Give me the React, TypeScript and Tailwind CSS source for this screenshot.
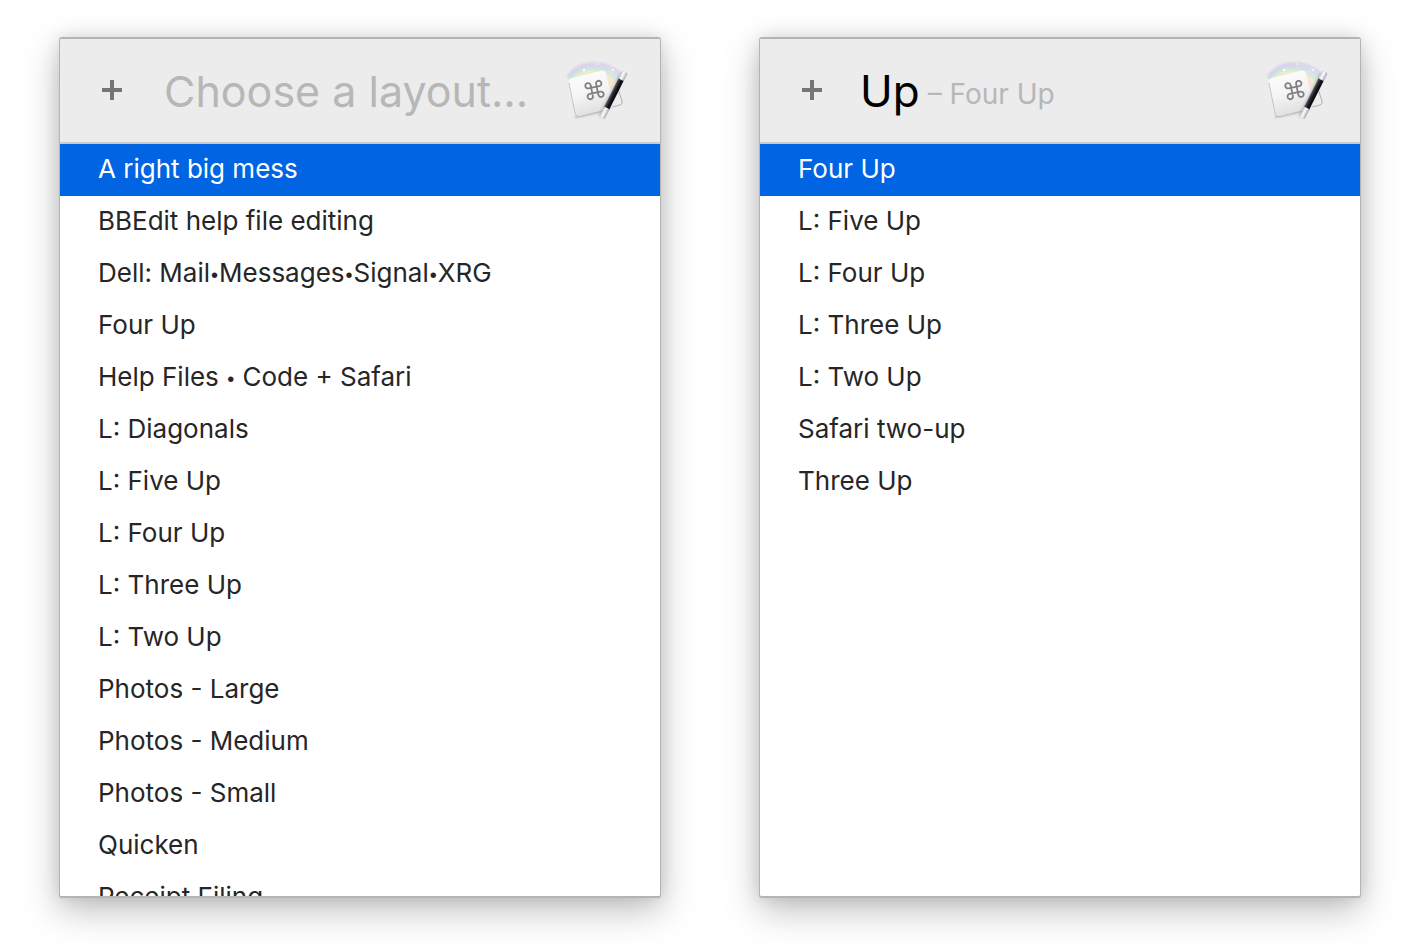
import { useState } from "react";

interface LayoutPickerProps {
    id: string;
    initialQuery: string;
    layouts: string[];
    suggestion?: string;
}

const allLayouts = [
    "A right big mess",
    "BBEdit help file editing",
    "Dell: Mail•Messages•Signal•XRG",
    "Four Up",
    "Help Files • Code + Safari",
    "L: Diagonals",
    "L: Five Up",
    "L: Four Up",
    "L: Three Up",
    "L: Two Up",
    "Photos - Large",
    "Photos - Medium",
    "Photos - Small",
    "Quicken",
    "Receipt Filing",
];

const upLayouts = [
    "Four Up",
    "L: Five Up",
    "L: Four Up",
    "L: Three Up",
    "L: Two Up",
    "Safari two-up",
    "Three Up",
];

const WandIcon = ({ id }: { id: string }) => {
    return (
        <svg viewBox="0 0 72 72" className="size-[72px] shrink-0" aria-hidden="true">
            <defs>
                <linearGradient id={id + "-key"} x1="0.2" y1="0" x2="0.5" y2="1">
                    <stop offset="0" stopColor="#fdfdfd" />
                    <stop offset="0.5" stopColor="#f5f5f6" />
                    <stop offset="1" stopColor="#dededf" />
                </linearGradient>
                <linearGradient id={id + "-wand"} x1="0" y1="0" x2="1" y2="0">
                    <stop offset="0" stopColor="#5c5c66" />
                    <stop offset="0.25" stopColor="#3a3a46" />
                    <stop offset="0.55" stopColor="#15151c" />
                    <stop offset="1" stopColor="#08080c" />
                </linearGradient>
                <linearGradient id={id + "-tip"} x1="0" y1="0" x2="1" y2="0">
                    <stop offset="0" stopColor="#b9c4cb" />
                    <stop offset="0.4" stopColor="#ffffff" />
                    <stop offset="1" stopColor="#a3a8b4" />
                </linearGradient>
                <linearGradient id={id + "-glow"} x1="0" y1="0" x2="0" y2="1">
                    <stop offset="0" stopColor="#fbe0d2" />
                    <stop offset="1" stopColor="#f6ece8" stopOpacity="0" />
                </linearGradient>
                <filter id={id + "-blur"} x="-20%" y="-20%" width="140%" height="140%">
                    <feGaussianBlur stdDeviation="0.9" />
                </filter>
            </defs>
            {/* back key */}
            <path d="M46 16L54 15Q58 15 59 19L66 46Q67 49 64 50L44 56Z" fill="#ededee" />
            <path d="M62 34L66 46Q67 49 64 50L48 54" fill="none" stroke="#a9a9ac" strokeWidth="0.9" />
            {/* rainbow */}
            <g fill="none" strokeWidth="2.6" filter={"url(#" + id + "-blur)"}>
                <path d="M12 22C20 6 50 3 66 20" stroke="#ddcfe9" />
                <path d="M13 24C21 9 49 6 64 23" stroke="#ccd8ee" />
                <path d="M14 26C22 12 48 9 62 27" stroke="#cbead3" />
                <path d="M16 27C24 15 46 12 60 31" stroke="#f1efc6" />
                <path d="M18 28C26 18 44 15 58 34" stroke="#f8dccb" />
            </g>
            <path d="M46 17C52 18 57 24 59 34L52 46Z" fill={"url(#" + id + "-glow)"} opacity="0.8" />
            <g fill="#ffffff">
                <circle cx="28" cy="15" r="1.2" />
                <circle cx="41" cy="9" r="0.8" />
                <circle cx="57" cy="15" r="1" />
            </g>
            {/* front key */}
            <path d="M19 62L52 55" stroke="#8f8f93" strokeWidth="2" opacity="0.6" filter={"url(#" + id + "-blur)"} />
            <path d="M16 23L46 15.5Q49 15 50 18L57 50Q57 53 54 54L24 61.5Q20 62 19 58L13 28Q12 24 16 23Z" fill={"url(#" + id + "-key)"} />
            <path d="M13 28L19 58Q20 62 24 61.5L54 54" fill="none" stroke="#b3b3b6" strokeWidth="0.7" />
            <path
                transform="translate(38.5 35) rotate(-12) translate(-10 -10)"
                d="M7.2 7.2V4.6A2.7 2.7 0 1 0 4.5 7.2H15.5A2.7 2.7 0 1 0 12.8 4.6V15.4A2.7 2.7 0 1 0 15.5 12.8H4.5A2.7 2.7 0 1 0 7.2 15.4Z"
                fill="none"
                stroke="#808084"
                strokeWidth="1.8"
            />
            {/* wand */}
            <g transform="translate(57.6 39.5) rotate(26.6)">
                <rect x="-4" y="-22" width="6" height="48" rx="1.5" fill="#77777b" opacity="0.35" filter={"url(#" + id + "-blur)"} />
                <rect x="-2.9" y="-17" width="5.8" height="33" fill={"url(#" + id + "-wand)"} />
                <rect x="-3" y="-25.5" width="6" height="9" rx="1.5" fill={"url(#" + id + "-tip)"} />
                <rect x="-3" y="15" width="6" height="11" rx="1.5" fill={"url(#" + id + "-tip)"} />
            </g>
        </svg>
    );
}

// Inter's bullet is too heavy inside a name, so it gets a lighter face
const LayoutName = ({ name }: { name: string }) => {
    return (
        <>
            {name.split("•").map((part, i) => (
                <span key={i}>
                    {i > 0 && <span className="mx-px font-['Liberation_Sans',sans-serif] text-[20px]">•</span>}
                    {part}
                </span>
            ))}
        </>
    );
}

const LayoutPicker = ({ id, initialQuery, layouts, suggestion }: LayoutPickerProps) => {
    const [query, setQuery] = useState(initialQuery);
    const [selected, setSelected] = useState(0);

    return (
        <section className="flex min-w-0 flex-1 flex-col rounded-[3px] border-x border-y-2 border-[#b4b4b4] bg-white shadow-[0_12px_36px_rgba(0,0,0,0.26),0_0_16px_rgba(0,0,0,0.1)]">
            <header className="flex h-[105px] shrink-0 items-center border-b-2 border-[#cbcbcb] bg-[#ececec] pr-8 pl-10">
                <button type="button" aria-label="Add layout" className="flex size-6 shrink-0 items-center justify-center pb-0.5">
                    <svg viewBox="0 0 20 20" className="size-5" aria-hidden="true">
                        <path d="M10 0V20M0 10H20" stroke="#757575" strokeWidth="4" />
                    </svg>
                </button>
                <div className="ml-9 flex min-w-0 flex-1 items-center gap-2">
                    <input
                        id={id}
                        type="text"
                        aria-label="Choose a layout"
                        placeholder="Choose a layout…"
                        value={query}
                        onChange={(e) => setQuery(e.target.value)}
                        className="field-sizing-content max-w-full min-w-0 bg-transparent text-[44px] leading-[60px] text-black outline-none placeholder:indent-1 placeholder:text-[43px] placeholder:text-[#b7b7b7]"
                    />
                    {suggestion &&
                        (<span className="pt-1.5 text-[28px] leading-[60px] whitespace-nowrap text-[#b7b7b7]">– {suggestion}</span>)
                    }
                </div>
                <WandIcon id={id + "-icon"} />
            </header>
            <ul className="min-h-0 flex-1 overflow-hidden">
                {layouts.map((name, i) => (
                    <li key={name}>
                        <button
                            type="button"
                            onClick={() => setSelected(i)}
                            className={"block h-[52px] w-full truncate pb-0.5 pl-[38px] text-left text-[26px] leading-[50px] " + (i === selected ? "bg-[#0064e3] text-white" : "text-[#262626]")}
                        >
                            <LayoutName name={name} />
                        </button>
                    </li>
                ))}
            </ul>
        </section>
    );
}

const App = () => {
    return (
        <main className="flex h-screen gap-[98px] bg-white pt-[37px] pr-[63px] pb-[54px] pl-[59px] font-['Inter',sans-serif]">
            <LayoutPicker id="all" initialQuery="" layouts={allLayouts} />
            <LayoutPicker id="up" initialQuery="Up" layouts={upLayouts} suggestion="Four Up" />
        </main>
    );
}

export default App;
